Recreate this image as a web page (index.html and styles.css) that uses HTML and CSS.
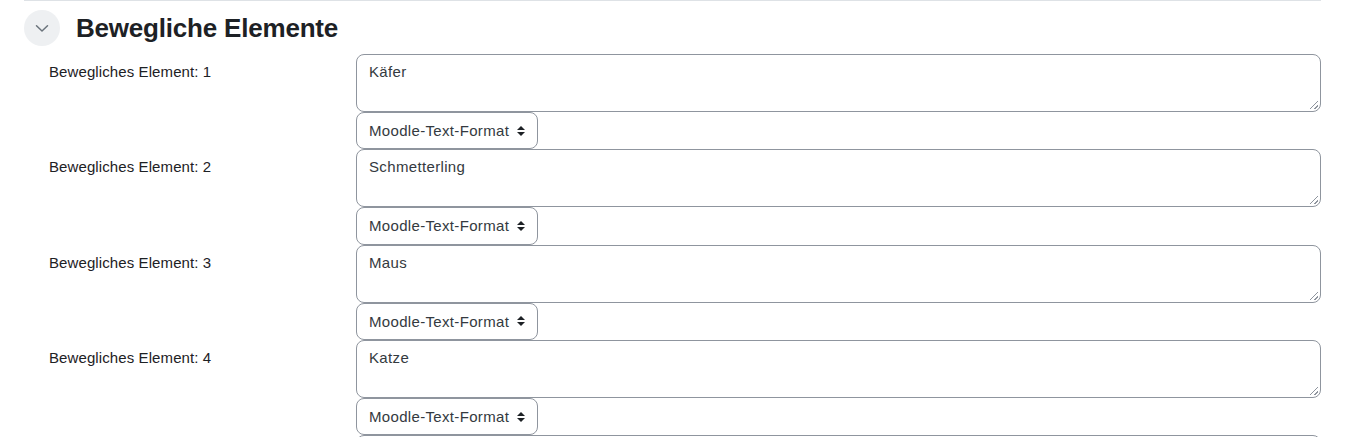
FILE: index.html
```html
<!DOCTYPE html>
<html lang="de">
<head>
<meta charset="utf-8">
<title>Bewegliche Elemente</title>
<link rel="stylesheet" href="styles.css">
</head>
<body>
<div class="page">
  <section class="fieldset">
    <div class="legend">
      <span class="toggle">
        <svg width="14" height="9" viewBox="0 0 14 9"><path d="M1.5 1.8 L7 7 L12.5 1.8" fill="none" stroke="#6a737b" stroke-width="1.5" stroke-linecap="round" stroke-linejoin="round"/></svg>
      </span>
      <h3 class="title">Bewegliche Elemente</h3>
    </div>
    <div class="rows">
      <div class="row">
        <label class="label">Bewegliches Element: 1</label>
        <div class="field">
          <div class="textarea">Käfer<span class="grip"></span></div>
          <div class="select">Moodle-Text-Format<span class="arrows"></span></div>
        </div>
      </div>
      <div class="row">
        <label class="label">Bewegliches Element: 2</label>
        <div class="field">
          <div class="textarea">Schmetterling<span class="grip"></span></div>
          <div class="select">Moodle-Text-Format<span class="arrows"></span></div>
        </div>
      </div>
      <div class="row">
        <label class="label">Bewegliches Element: 3</label>
        <div class="field">
          <div class="textarea">Maus<span class="grip"></span></div>
          <div class="select">Moodle-Text-Format<span class="arrows"></span></div>
        </div>
      </div>
      <div class="row">
        <label class="label">Bewegliches Element: 4</label>
        <div class="field">
          <div class="textarea">Katze<span class="grip"></span></div>
          <div class="select">Moodle-Text-Format<span class="arrows"></span></div>
        </div>
      </div>
      <div class="row">
        <span class="label"></span>
        <div class="field">
          <div class="textarea"><span class="grip"></span></div>
        </div>
      </div>
    </div>
  </section>
</div>
</body>
</html>
```
FILE: styles.css
```css
html, body {
  margin: 0;
  padding: 0;
  background: #fff;
  overflow: hidden;
}
body {
  font-family: "Liberation Sans", Arial, sans-serif;
  color: #1d2125;
  font-size: 15px;
  line-height: 1.5;
}
.page {
  padding-left: 24px;
  width: 1297px;
}
.fieldset {
  border-top: 1px solid #dee2e6;
}
.legend {
  display: flex;
  align-items: center;
  height: 54px;
  margin-top: -1px;
}
.toggle {
  width: 36px;
  height: 36px;
  border-radius: 50%;
  background: #eef0f2;
  display: flex;
  align-items: center;
  justify-content: center;
  margin-top: 1px;
}
.toggle svg { display: block; margin-top: 1px; }
.title {
  margin: 3px 0 0 16px;
  font-size: 26px;
  font-weight: 700;
  line-height: 1.2;
  color: #1d2125;
  letter-spacing: -0.2px;
}
.rows {
  display: flex;
  flex-direction: column;
}
.row {
  display: grid;
  grid-template-columns: 332px 1fr;
}
.label {
  padding: 7px 0 0 25px;
  font-size: 15px;
  letter-spacing: 0.1px;
}
.field {
  display: flex;
  flex-direction: column;
  align-items: flex-start;
}
.textarea {
  position: relative;
  box-sizing: border-box;
  width: 100%;
  height: 58px;
  border: 1px solid #8f959e;
  border-radius: 8px;
  padding: 6px 12px;
  letter-spacing: 0.35px;
  color: #343a40;
}
.grip {
  position: absolute;
  right: 2px;
  bottom: 2px;
  width: 8px;
  height: 8px;
  background:
    linear-gradient(135deg, transparent 45%, #8f959e 45%, #8f959e 55%, transparent 55%),
    linear-gradient(135deg, transparent 75%, #8f959e 75%, #8f959e 85%, transparent 85%);
}
.select {
  position: relative;
  box-sizing: border-box;
  height: 37.3px;
  border: 1px solid #8f959e;
  border-radius: 8px;
  padding: 7px 30px 5px 12px;
  width: 182px;
  white-space: nowrap;
  letter-spacing: 0.33px;
  color: #343a40;
}
.arrows {
  position: absolute;
  right: 12px;
  top: 50%;
  width: 8px;
  height: 10px;
  margin-top: -5px;
}
.arrows::before, .arrows::after {
  content: "";
  position: absolute;
  left: 0;
  border-left: 4px solid transparent;
  border-right: 4px solid transparent;
}
.arrows::before {
  top: 0;
  border-bottom: 4px solid #1d2125;
}
.arrows::after {
  bottom: 0;
  border-top: 4px solid #1d2125;
}
```
